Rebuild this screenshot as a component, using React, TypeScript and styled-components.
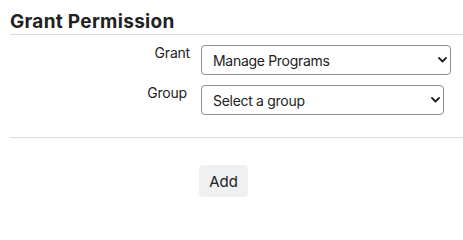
import styled, { createGlobalStyle } from "styled-components"

const GlobalStyle = createGlobalStyle`
  body {
    margin: 0;
    background: #ffffff;
    font-family: Inter, "Noto Sans", sans-serif;
    color: #212529;
  }
`

function Chevron() {
  return (
    <svg width="9" height="6" viewBox="0 0 9 6">
      <path d="M1 1 L4.5 4.5 L8 1" fill="none" stroke="#222" strokeWidth="1.8" strokeLinecap="round" strokeLinejoin="round" />
    </svg>
  )
}

export default function App() {
  return (
    <Wrapper>
      <GlobalStyle />
      <Heading>Grant Permission</Heading>
      <Form>
        <Label>Grant</Label>
        <SelectBox width={250}>
          <Select defaultValue="manage">
            <option value="manage">Manage Programs</option>
          </Select>
          <Arrow><Chevron /></Arrow>
        </SelectBox>
        <Label shift={3}>Group</Label>
        <SelectBox width={243}>
          <Select defaultValue="">
            <option value="">Select a group</option>
          </Select>
          <Arrow><Chevron /></Arrow>
        </SelectBox>
      </Form>
      <Actions>
        <AddButton>Add</AddButton>
      </Actions>
    </Wrapper>
  )
}

const Wrapper = styled.div`
  padding: 10px 0 0 10px;
`

const Heading = styled.h2`
  margin: 0;
  font-size: 19px;
  line-height: 24px;
  font-weight: 700;
  letter-spacing: 0.3px;
  color: #222;
  border-bottom: 1px solid #dcdcdc;
`

const Form = styled.div`
  display: grid;
  grid-template-columns: 180px auto;
  column-gap: 11px;
  row-gap: 10px;
  justify-items: start;
  padding-top: 10px;
  padding-bottom: 22px;
  border-bottom: 1px solid #dcdcdc;
`

const Label = styled.label<{ shift?: number }>`
  justify-self: end;
  padding-top: 0;
  padding-right: ${p => p.shift ?? 0}px;
  font-size: 14px;
  line-height: 16px;
  letter-spacing: -0.2px;
  color: #222;
`

const SelectBox = styled.div<{ width: number }>`
  position: relative;
  width: ${p => p.width}px;
`

const Select = styled.select`
  appearance: none;
  display: block;
  width: 100%;
  height: 30px;
  padding: 0 28px 0 11px;
  font-family: Inter, "Noto Sans", sans-serif;
  font-size: 14px;
  letter-spacing: -0.3px;
  color: #222;
  background: #fff;
  border: 1px solid #8f8f8f;
  border-radius: 4px;
  outline: none;
`

const Arrow = styled.span`
  position: absolute;
  right: 4px;
  top: 50%;
  transform: translateY(-50%);
  display: flex;
  pointer-events: none;
`

const Actions = styled.div`
  padding: 27px 0 0 189px;
`

const AddButton = styled.button`
  display: block;
  width: 49px;
  height: 32px;
  padding: 0;
  font-family: Inter, "Noto Sans", sans-serif;
  font-size: 15px;
  color: #222;
  background: #eff0f2;
  border: 0;
  border-radius: 4px;
`
